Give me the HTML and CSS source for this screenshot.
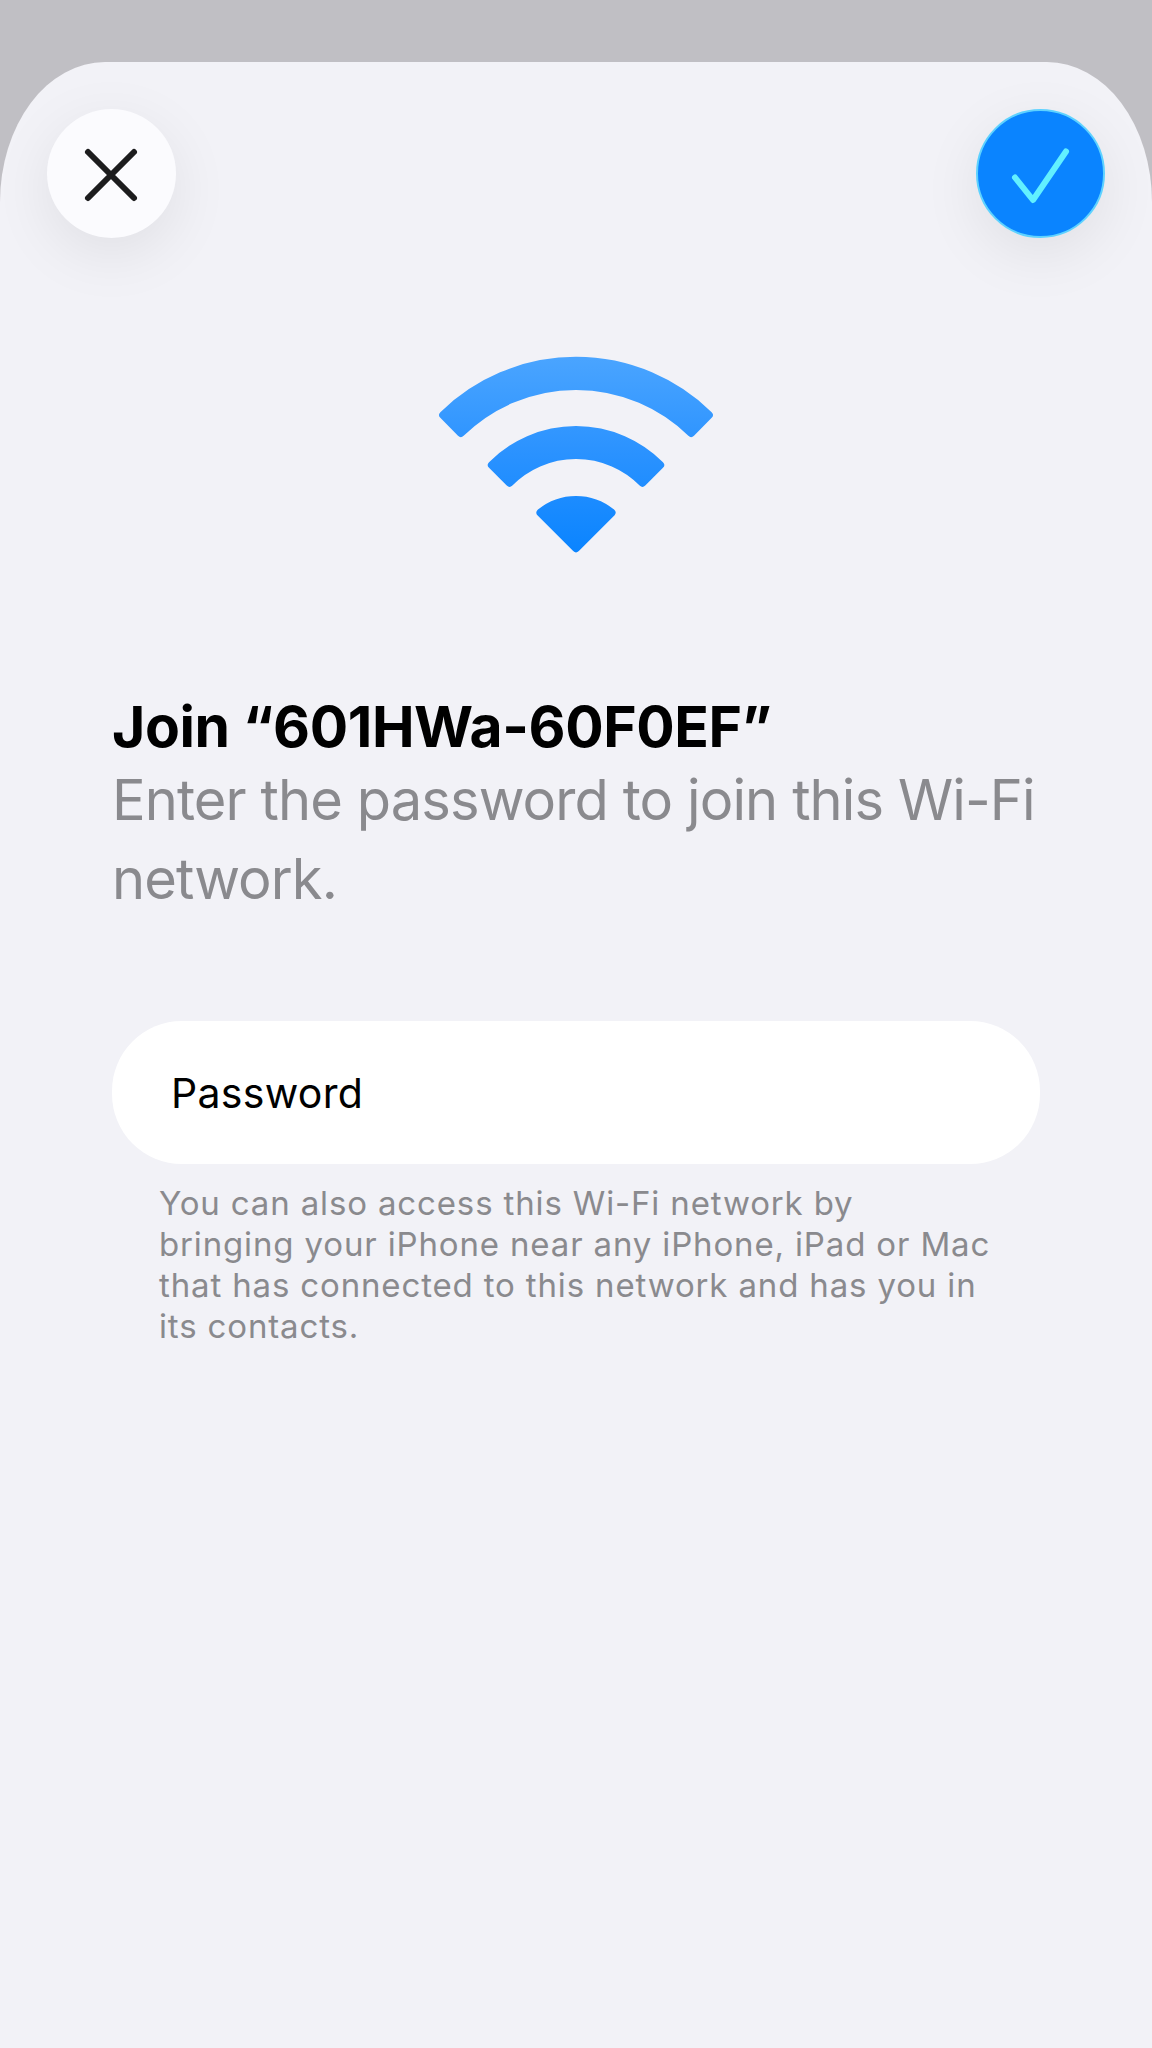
FILE: index.html
```html
<!DOCTYPE html>
<html lang="en">
<head>
    <meta charset="UTF-8">
    <meta name="viewport" content="width=device-width, initial-scale=1.0">
    <title>Join Wi-Fi</title>
    <link rel="stylesheet" href="styles.css">
</head>
<body>
    <div class="sheet">
        <div class="top-bar">
            <button class="round-btn close-btn" aria-label="Close">
                <svg width="60" height="60" viewBox="0 0 60 60">
                    <path d="M6 8 L52 54 M52 8 L6 54" fill="none" stroke="#1c1c1e" stroke-width="6" stroke-linecap="round"/>
                </svg>
            </button>
            <button class="round-btn confirm-btn" aria-label="Join">
                <svg width="64" height="64" viewBox="0 0 64 64">
                    <path d="M6 35.5 L24 58 L57 9.5" fill="none" stroke="#62f0ff" stroke-width="6" stroke-linecap="round" stroke-linejoin="round"/>
                </svg>
            </button>
        </div>

        <div class="wifi-icon">
            <svg width="280" height="200" viewBox="0 0 280 200">
                <defs>
                    <linearGradient id="wifiFill" gradientUnits="userSpaceOnUse" x1="0" y1="0" x2="0" y2="200">
                        <stop offset="0" stop-color="#4ba5ff"/>
                        <stop offset="0.5" stop-color="#2a92ff"/>
                        <stop offset="1" stop-color="#0a84ff"/>
                    </linearGradient>
                </defs>
                <g fill="url(#wifiFill)" stroke="url(#wifiFill)" stroke-width="8" stroke-linejoin="round">
                    <path d="M7.15 61 A190 190 0 0 1 272.85 61 L255.15 79 A164.6 164.6 0 0 0 24.85 79 Z"/>
                    <path d="M55.85 111 A118.7 118.7 0 0 1 224.15 111 L206.45 128.65 A93.7 93.7 0 0 0 73.55 128.65 Z"/>
                    <path d="M104.5 158.7 A56 56 0 0 1 175.5 158.7 L140 194.2 Z"/>
                </g>
            </svg>
        </div>

        <div class="intro">
            <h1>Join “601HWa-60F0EF”</h1>
            <p>Enter the password to join this <span class="nowrap">Wi-Fi</span> network.</p>
        </div>

        <div class="password-field">Password</div>

        <p class="hint">You can also access this Wi-Fi network by<br>bringing your iPhone near any iPhone, iPad or Mac<br>that has connected to this network and has you in<br>its contacts.</p>
    </div>
</body>
</html>
```

FILE: styles.css
```css
html, body {
    margin: 0;
    padding: 0;
}
body {
    height: 2048px;
    overflow: hidden;
    background-color: #c0bfc4;
    font-family: Inter, "Liberation Sans", sans-serif;
    padding-top: 62px;
    box-sizing: border-box;
}
.sheet {
    height: 1986px;
    background: #f2f2f7;
    border-radius: 105px 105px 0 0 / 140px 140px 0 0;
    padding-top: 47px;
    box-sizing: border-box;
}
.top-bar {
    display: flex;
    justify-content: space-between;
    padding: 0 47px;
}
.round-btn {
    width: 129px;
    height: 129px;
    padding: 0;
    border: none;
    border-radius: 50%;
    display: flex;
    align-items: center;
    justify-content: center;
    box-shadow: 0 16px 60px rgba(0,0,0,0.08);
}
.close-btn {
    background: #fbfbfe;
}
.confirm-btn {
    background: #0a84ff;
    border: 2px solid #5ed2ff;
    box-sizing: border-box;
}
.wifi-icon {
    display: flex;
    justify-content: center;
    margin-top: 116px;
}
.wifi-icon svg {
    display: block;
}
.intro {
    margin: 139px 90px 0 112px;
}
.intro h1 {
    margin: 0;
    font-size: 57px;
    line-height: 68px;
    font-weight: 700;
    color: #000;
    letter-spacing: -0.4px;
}
.intro p {
    margin: 0;
    font-size: 56px;
    line-height: 79px;
    font-weight: 400;
    color: #8a8a8e;
    letter-spacing: -0.9px;
}
.nowrap {
    white-space: nowrap;
}
.password-field {
    margin: 102px 112px 0;
    height: 143px;
    padding-left: 59px;
    display: flex;
    align-items: center;
    background: #fff;
    border-radius: 70px;
    font-size: 41px;
    letter-spacing: 0.3px;
    color: #000;
}
.hint {
    margin: 19px 100px 0 159px;
    font-size: 33px;
    line-height: 41px;
    letter-spacing: 0.85px;
    color: #8a8a8e;
}
```
